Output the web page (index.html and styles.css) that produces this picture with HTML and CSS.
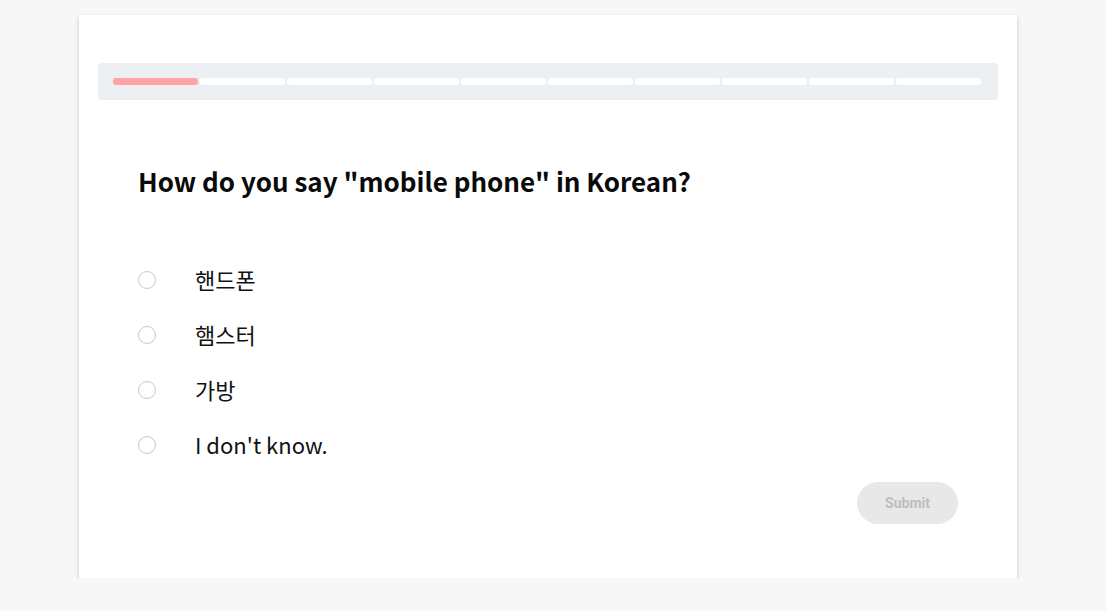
FILE: index.html
```html
<!DOCTYPE html>
<html lang="en">
<head>
<meta charset="utf-8">
<link rel="stylesheet" href="styles.css">
</head>
<body>
<div class="card">
  <div class="progress">
    <span class="seg done"></span><span class="seg"></span><span class="seg"></span><span class="seg"></span><span class="seg"></span><span class="seg"></span><span class="seg"></span><span class="seg"></span><span class="seg"></span><span class="seg"></span>
  </div>
  <div class="content">
    <h1 class="question">How do you say "mobile phone" in Korean?</h1>
    <ul class="options">
      <li class="option"><span class="radio"></span><span class="label">핸드폰</span></li>
      <li class="option"><span class="radio"></span><span class="label">햄스터</span></li>
      <li class="option"><span class="radio"></span><span class="label">가방</span></li>
      <li class="option"><span class="radio"></span><span class="label">I don't know.</span></li>
    </ul>
    <div class="actions"><button class="submit" disabled>Submit</button></div>
  </div>
</div>
</body>
</html>
```
FILE: styles.css
```css
html, body { margin: 0; padding: 0; }
body {
  background: #f7f7f7;
  font-family: "Noto Sans CJK KR", "Noto Sans", sans-serif;
  color: #111;
}
.card {
  box-sizing: border-box;
  width: 938px;
  height: 563px;
  margin: 15px 0 0 79px;
  background: #fff;
  box-shadow: 0 2px 4px rgba(0,0,0,0.2);
  padding: 48px 19px 0;
}
.progress {
  display: flex;
  padding: 15px;
  background: #edf0f3;
  border-radius: 4px;
}
.seg {
  flex: 1;
  height: 7px;
  margin-right: 2px;
  background: #fff;
  border-radius: 3px;
}
.seg.done { background: #ffa3a6; }
.content { padding: 0 40px; }
.question {
  margin: 63px 0 0 0;
  font-size: 26px;
  line-height: 36px;
  font-weight: 700;
  color: #0a0a0a;
}
.options {
  list-style: none;
  margin: 66px 0 0;
  padding: 0;
  display: flex;
  flex-direction: column;
  gap: 25px;
}
.option {
  display: flex;
  align-items: center;
  height: 30px;
}
.radio {
  box-sizing: border-box;
  width: 18px;
  height: 18px;
  border: 1px solid #c8c8c8;
  border-radius: 50%;
  margin-right: 39px;
}
.label {
  font-size: 22px;
  line-height: 30px;
  padding-bottom: 3px;
  color: #111;
}
.actions {
  display: flex;
  justify-content: flex-end;
  margin-top: 22px;
}
.submit {
  width: 101px;
  height: 42px;
  border: none;
  border-radius: 21px;
  background: #e8e8e8;
  color: #bdbdbd;
  font-family: Roboto, "Liberation Sans", sans-serif;
  font-weight: 700;
  font-size: 14px;
  padding: 0;
}
```
